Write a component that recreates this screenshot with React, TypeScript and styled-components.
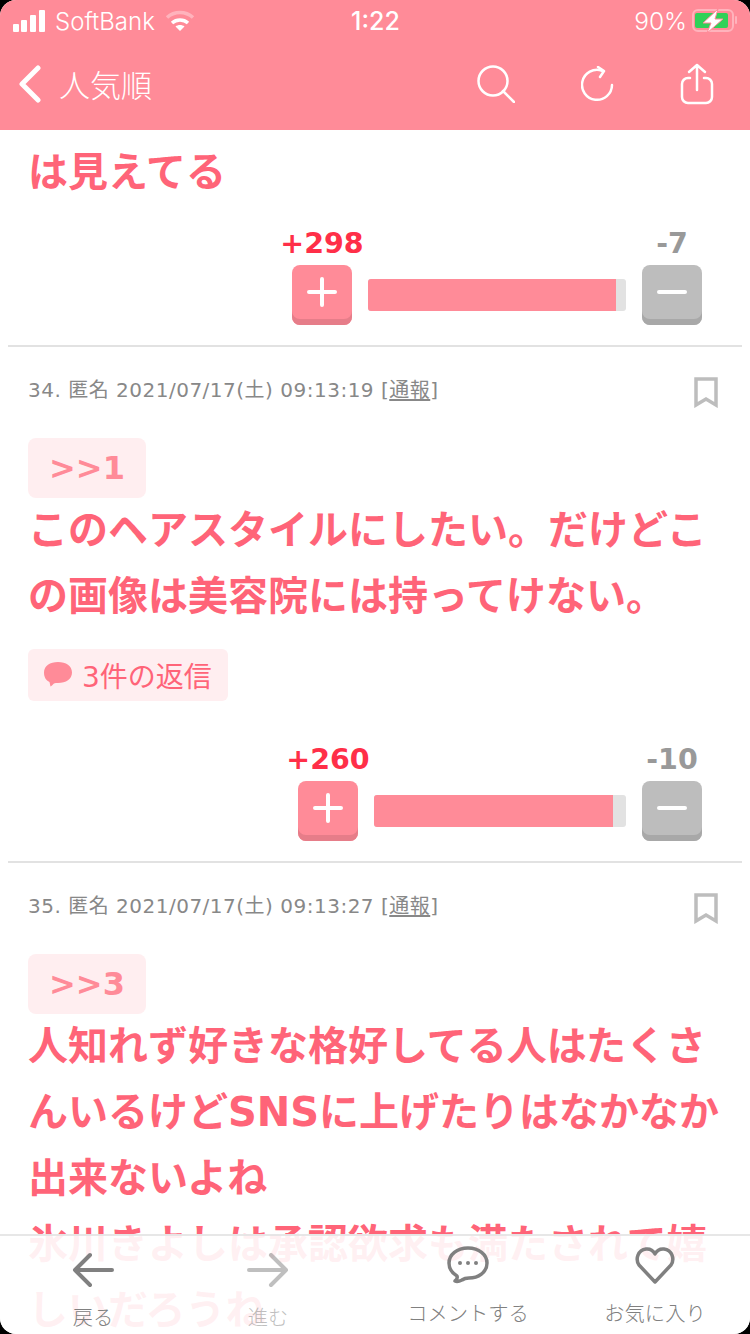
import styled, { createGlobalStyle } from 'styled-components';

const GlobalStyle = createGlobalStyle`
	html, body {
		margin: 0;
		padding: 0;
		background: #000;
	}
	* {
		box-sizing: border-box;
	}
`;

const Screen = styled.div`
	position: relative;
	width: 750px;
	height: 1334px;
	overflow: hidden;
	border-radius: 16px;
	background: #fff;
	font-family: 'DejaVu Sans', 'Noto Sans CJK JP', sans-serif;
`;
const TopBar = styled.header`
	height: 130px;
	background: #ff8b98;
	color: #fff;
`;
const StatusBar = styled.div`
	display: grid;
	grid-template-columns: 1fr auto 1fr;
	align-items: center;
	height: 40px;
	padding: 2px 12px 0 13px;
	font-family: Inter, 'Liberation Sans', sans-serif;
	font-size: 24px;
`;
const StatusLeft = styled.div`
	display: flex;
	align-items: center;
	gap: 8px;
`;
const StatusRight = styled.div`
	display: flex;
	align-items: center;
	justify-content: flex-end;
	gap: 5px;
`;
const Carrier = styled.span`
	font-weight: 300;
`;
const Clock = styled.span`
	font-size: 25px;
	font-weight: 500;
`;
const Percent = styled.span`
	font-size: 24.500px;
	font-weight: 300;
`;
const NavBar = styled.nav`
	display: flex;
	align-items: center;
	height: 88px;
	padding: 0 36px 0 18px;
`;
const NavTitle = styled.h1`
	flex: 1;
	margin: 0 0 2px 17px;
	font-family: 'Noto Sans CJK JP', sans-serif;
	font-size: 31px;
	font-weight: 300;
`;
const NavIcons = styled.div`
	display: flex;
	align-items: center;
`;
const NavIcon = styled.svg<{ $gap?: number }>`
	display: block;
	margin-left: ${(props) => props.$gap ?? 0}px;
	fill: none;
	stroke: #fff;
	stroke-width: 2.500;
	stroke-linecap: round;
	stroke-linejoin: round;
`;

const Comment = styled.section`
	margin: 0 8px;
	padding: 0 20px 20px;
	border-bottom: 2px solid #e2e2e2;
`;
const FirstComment = styled(Comment)`
	padding-top: 9px;
`;
const MetaRow = styled.div`
	display: flex;
	justify-content: space-between;
	align-items: flex-start;
	height: 32px;
	margin: 30px 4px 29px 0;
`;
const Meta = styled.div`
	font-size: 20px;
	letter-spacing: 0.500px;
	line-height: 26px;
	color: #888;
	u {
		text-underline-offset: 2px;
	}
`;
const Anchor = styled.div`
	display: flex;
	align-items: center;
	justify-content: center;
	width: 118px;
	height: 60px;
	margin-bottom: -1px;
	border-radius: 8px;
	background: #ffeef0;
	color: #ff8b98;
	font-size: 32px;
	font-weight: 700;
`;
const Body = styled.p`
	margin: 0 -6px 0 0;
	color: #ff6478;
	font-size: 40px;
	font-weight: 700;
	line-height: 66px;
`;
const RepliesChip = styled.div`
	display: flex;
	align-items: center;
	gap: 10px;
	width: 200px;
	height: 52px;
	margin: 20px 0 41px;
	padding-left: 16px;
	border-radius: 6px;
	background: #ffeef0;
	color: #ff6478;
	font-size: 28px;
	font-weight: 400;
`;
const VoteRow = styled.div`
	display: flex;
	justify-content: flex-end;
	align-items: flex-end;
	gap: 16px;
	margin-top: 21px;
	padding-right: 20px;
`;
const VoteColumn = styled.div`
	display: flex;
	flex-direction: column;
	align-items: center;
	width: 60px;
`;
const VoteCount = styled.div<{ $minus?: boolean }>`
	height: 36px;
	margin-bottom: 3px;
	color: ${(props) => (props.$minus ? '#999' : '#ff2f48')};
	font-size: 28.500px;
	font-weight: 700;
	line-height: 36px;
	white-space: nowrap;
`;
const VoteButton = styled.div<{ $minus?: boolean }>`
	display: flex;
	align-items: center;
	justify-content: center;
	width: 60px;
	height: 60px;
	padding-bottom: 6px;
	border-radius: 8px;
	background: ${(props) => (props.$minus ? '#bdbdbd' : '#ff8b98')};
	box-shadow: inset 0 -6px 0 ${(props) => (props.$minus ? '#a8a8a8' : '#e67d89')};
`;
const Meter = styled.div<{ $width: number }>`
	width: ${(props) => props.$width}px;
	height: 32px;
	margin-bottom: 14px;
	overflow: hidden;
	border-radius: 3px;
	background: #e2e2e2;
`;
const MeterFill = styled.div`
	height: 100%;
	background: #ff8b98;
`;

const TabBar = styled.footer`
	position: absolute;
	left: 0;
	right: 0;
	bottom: 0;
	display: grid;
	grid-template-columns: 186px 164px 236px 138px;
	height: 100px;
	border-top: 2px solid rgba(225, 225, 225, 0.8);
	background: rgba(255, 255, 255, 0.9);
`;
const Tab = styled.div<{ $dim?: boolean }>`
	display: flex;
	flex-direction: column;
	align-items: center;
	justify-content: flex-start;
	opacity: ${(props) => (props.$dim ? 0.5 : 1)};
`;
const TabIcon = styled.svg<{ $top: number }>`
	display: block;
	margin-top: ${(props) => props.$top}px;
	height: 40px;
	fill: none;
	stroke: #808080;
	stroke-width: 4;
	stroke-linecap: round;
	stroke-linejoin: round;
`;
const TabLabel = styled.span<{ $gap: number }>`
	margin-top: ${(props) => props.$gap}px;
	color: #808080;
	font-family: 'Noto Sans CJK JP', sans-serif;
	font-size: 20.300px;
	font-weight: 300;
	line-height: 26px;
	white-space: nowrap;
`;

function Bookmark() {
	return (
		<svg width='24' height='31' viewBox='0 0 24 31'>
			<path d='M2 2h20v26l-10-6-10 6z' fill='none' stroke='#bdbdbd' strokeWidth='3.500' />
		</svg>
	);
}

function Vote({ plus, minus, meter, ratio }: { plus: string; minus: string; meter: number; ratio: number }) {
	return (
		<VoteRow>
			<VoteColumn>
				<VoteCount>{plus}</VoteCount>
				<VoteButton>
					<svg width='30' height='30' viewBox='0 0 30 30'>
						<path d='M15 2v26M2 15h26' stroke='#fff' strokeWidth='4' strokeLinecap='round' />
					</svg>
				</VoteButton>
			</VoteColumn>
			<Meter $width={meter}>
				<MeterFill style={{ width: `${ratio}%` }} />
			</Meter>
			<VoteColumn>
				<VoteCount $minus>{minus}</VoteCount>
				<VoteButton $minus>
					<svg width='30' height='30' viewBox='0 0 30 30'>
						<path d='M2 15h26' stroke='#fff' strokeWidth='4' strokeLinecap='round' />
					</svg>
				</VoteButton>
			</VoteColumn>
		</VoteRow>
	);
}

function App() {
	return (
		<Screen>
			<GlobalStyle />
			<TopBar>
				<StatusBar>
					<StatusLeft>
						<svg width='34' height='22' viewBox='0 0 34 22' fill='#fff'>
							<rect x='0' y='14' width='6' height='8' rx='1' />
							<rect x='8' y='10' width='6' height='12' rx='1' />
							<rect x='17' y='5' width='6' height='17' rx='1' />
							<rect x='26' y='0' width='6' height='22' rx='1' />
						</svg>
						<Carrier>SoftBank</Carrier>
						<svg width='30' height='22' viewBox='0 0 30 22' fill='none' style={{ marginLeft: 2 }}>
							<path d='M2 7.500C9.500 .8 20.500 .8 28 7.500' stroke='#ffb3bc' strokeWidth='3.500' />
							<path d='M7 13C11.500 9 18.500 9 23 13' stroke='#fff' strokeWidth='3.500' />
							<path d='M10.500 16.500C13 14.500 17 14.500 19.500 16.500L15 21z' fill='#fff' />
						</svg>
					</StatusLeft>
					<Clock>1:22</Clock>
					<StatusRight>
						<Percent>90%</Percent>
						<svg width='46' height='24' viewBox='0 0 46 24'>
							<rect x='1' y='1' width='40' height='21' rx='5' fill='none' stroke='#ffb3bc' strokeWidth='2' />
							<rect x='3' y='4' width='33' height='15' rx='2' fill='#30d158' />
							<rect x='43' y='7' width='2' height='8' rx='1' fill='#ffb3bc' />
							<path d='M26 0L11 14h8l-4 10 16-14h-8z' fill='#fff' stroke='#ff8b98' strokeWidth='1' />
						</svg>
					</StatusRight>
				</StatusBar>
				<NavBar>
					<svg width='24' height='38' viewBox='0 0 24 38' fill='none'>
						<path d='M20 3L4 19l16 16' stroke='#fff' strokeWidth='5' strokeLinecap='round' strokeLinejoin='round' />
					</svg>
					<NavTitle>人気順</NavTitle>
					<NavIcons>
						<NavIcon width='38' height='38' viewBox='0 0 38 38'>
							<circle cx='16' cy='16' r='14.500' />
							<path d='M26 26l11 11' />
						</NavIcon>
						<NavIcon $gap={66} width='34' height='36' viewBox='0 0 34 36'>
							<path d='M31 19a15 15 0 1 1-10-14.300' />
							<path d='M17 1l6 4-4 6' />
						</NavIcon>
						<NavIcon $gap={65} width='34' height='42' viewBox='0 0 34 42'>
							<path d='M10 15H8a6 6 0 0 0-6 6v13a6 6 0 0 0 6 6h18a6 6 0 0 0 6-6V21a6 6 0 0 0-6-6h-2' />
							<path d='M17 27V2M9 9l8-7 8 7' />
						</NavIcon>
					</NavIcons>
				</NavBar>
			</TopBar>

			<FirstComment>
				<Body>は見えてる</Body>
				<Vote plus='+298' minus='-7' meter={258} ratio={96} />
			</FirstComment>

			<Comment>
				<MetaRow>
					<Meta>
						34. 匿名 2021/07/17(土) 09:13:19 [<u>通報</u>]
					</Meta>
					<Bookmark />
				</MetaRow>
				<Anchor>&gt;&gt;1</Anchor>
				<Body>このヘアスタイルにしたい。だけどこの画像は美容院には持ってけない。</Body>
				<RepliesChip>
					<svg width='28' height='26' viewBox='0 0 28 26'>
						<path d='M14 0c8 0 14 4 14 10.500S22 21 14 21c-1.500 0-3 0-4 .500-1 1-2.500 2.500-3.500 3l-1-4.500C2 18.500 0 15 0 10.500 0 4 6 0 14 0z' fill='#ff8b98' />
					</svg>
					3件の返信
				</RepliesChip>
				<Vote plus='+260' minus='-10' meter={252} ratio={95} />
			</Comment>

			<Comment>
				<MetaRow>
					<Meta>
						35. 匿名 2021/07/17(土) 09:13:27 [<u>通報</u>]
					</Meta>
					<Bookmark />
				</MetaRow>
				<Anchor>&gt;&gt;3</Anchor>
				<Body>
					人知れず好きな格好してる人はたくさんいるけどSNSに上げたりはなかなか出来ないよね
					<br />
					氷川きよしは承認欲求も満たされて嬉しいだろうね
				</Body>
			</Comment>

			<TabBar>
				<Tab>
					<TabIcon $top={14} width='42' viewBox='0 0 42 40'>
						<path d='M40 20H3M18 5L3 20l15 15' />
					</TabIcon>
					<TabLabel $gap={13}>戻る</TabLabel>
				</Tab>
				<Tab $dim>
					<TabIcon $top={14} width='42' viewBox='0 0 42 40'>
						<path d='M2 20h37M24 5l15 15-15 15' />
					</TabIcon>
					<TabLabel $gap={13}>進む</TabLabel>
				</Tab>
				<Tab>
					<TabIcon $top={9} width='42' viewBox='0 0 42 40'>
						<path d='M21 3c11 0 19 6.500 19 15 0 9.500-9 15-18 15-3 0-5 .500-7 2-2 1-5 2-7 1 2-1.500 2.500-3.500 2-5C5 28 2 23.500 2 18 2 9.500 10 3 21 3z' strokeWidth='3.500' />
						<circle cx='13' cy='18' r='2' fill='#808080' stroke='none' />
						<circle cx='21' cy='18' r='2' fill='#808080' stroke='none' />
						<circle cx='29' cy='18' r='2' fill='#808080' stroke='none' />
					</TabIcon>
					<TabLabel $gap={14}>コメントする</TabLabel>
				</Tab>
				<Tab>
					<TabIcon $top={9} width='40' viewBox='0 0 40 40'>
						<path d='M20 37L4 20C0 14 3 5 11 4c4-.500 7 1.500 9 5 2-3.500 5-5.500 9-5 8 1 11 10 7 16z' strokeWidth='3.500' />
					</TabIcon>
					<TabLabel $gap={14}>お気に入り</TabLabel>
				</Tab>
			</TabBar>
		</Screen>
	);
}

export default App;
